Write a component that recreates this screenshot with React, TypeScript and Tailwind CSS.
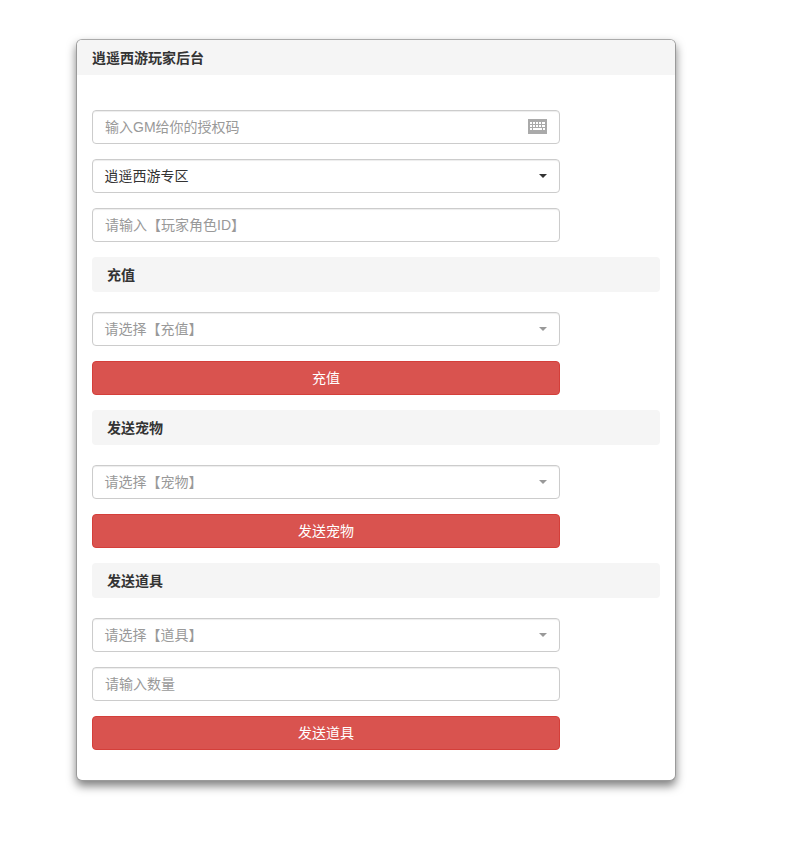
import type { ReactNode } from 'react';

const font = "font-['Liberation_Sans','Noto_Sans_CJK_SC',sans-serif]";

function SectionTitle({ children }: { children: ReactNode }) {
  return (
    <div className="h-[35px] bg-[#f5f5f5] rounded-[4px] pl-[15px] pt-[1px] flex items-center text-[14px] font-bold text-[#333]">
      {children}
    </div>
  );
}

function TextField({ placeholder, className = '' }: { placeholder: string; className?: string }) {
  return (
    <input
      placeholder={placeholder}
      className={`block w-[468px] h-[34px] px-3 bg-white border border-[#ccc] rounded-[4px] shadow-[inset_0_1px_1px_rgba(0,0,0,0.075)] text-[14px] text-[#555] placeholder:text-[#999] outline-none ${className}`}
    />
  );
}

function SelectField({ label, active = false, className = '' }: { label: string; active?: boolean; className?: string }) {
  return (
    <div
      className={`w-[468px] h-[34px] pl-[11.5px] pr-[12px] bg-white border border-[#ccc] rounded-[4px] shadow-[inset_0_1px_1px_rgba(0,0,0,0.075)] flex items-center justify-between text-[14px] ${active ? 'text-[#333]' : 'text-[#999]'} ${className}`}
    >
      <span>{label}</span>
      <span className={`w-0 h-0 border-x-[4px] border-x-transparent border-t-[4px] ${active ? 'border-t-[#333]' : 'border-t-[#999]'}`} />
    </div>
  );
}

function RedButton({ children }: { children: ReactNode }) {
  return (
    <button className="block w-[468px] h-[34px] bg-[#d9534f] border border-[#d43f3a] rounded-[4px] text-[14px] text-white">
      {children}
    </button>
  );
}

function KeyboardIcon() {
  return (
    <svg width="19" height="15" viewBox="0 0 19 15" className="absolute right-[13px] top-[9px]">
      <rect width="19" height="15" fill="#aaa" />
      <g fill="#fff">
        <rect x="2" y="3" width="2" height="2" />
        <rect x="5" y="3" width="2" height="2" />
        <rect x="8" y="3" width="2" height="2" />
        <rect x="11" y="3" width="2" height="2" />
        <rect x="14" y="3" width="3" height="2" />
        <rect x="2" y="6" width="2" height="2" />
        <rect x="5" y="6" width="2" height="2" />
        <rect x="8" y="6" width="2" height="2" />
        <rect x="11" y="6" width="2" height="2" />
        <rect x="14" y="6" width="3" height="2" />
        <rect x="2" y="9" width="2" height="2" />
        <rect x="5" y="9" width="9" height="2" />
        <rect x="15" y="9" width="2" height="2" />
      </g>
    </svg>
  );
}

export default function App() {
  return (
    <div className={`min-h-[853px] bg-white pt-[39px] pl-[76px] ${font}`}>
      <div className="w-[600px] h-[742px] bg-white rounded-[6px] border border-[#9a9a9a] border-t-[#aaa] shadow-[0_5px_10px_rgba(0,0,0,0.5)] overflow-hidden">
        <div className="h-[35px] bg-[#f5f5f5] pl-[15px] pt-[1px] flex items-center text-[14px] font-bold text-[#333]">
          逍遥西游玩家后台
        </div>
        <div className="px-[15px] pt-[35px]">
          <div className="relative w-[468px]">
            <TextField placeholder="输入GM给你的授权码" />
            <KeyboardIcon />
          </div>
          <SelectField label="逍遥西游专区" active className="mt-[15px]" />
          <TextField placeholder="请输入【玩家角色ID】" className="mt-[15px]" />

          <div className="w-[568px] mt-[15px]">
            <SectionTitle>充值</SectionTitle>
          </div>
          <SelectField label="请选择【充值】" className="mt-[20px]" />
          <div className="mt-[15px]">
            <RedButton>充值</RedButton>
          </div>

          <div className="w-[568px] mt-[15px]">
            <SectionTitle>发送宠物</SectionTitle>
          </div>
          <SelectField label="请选择【宠物】" className="mt-[20px]" />
          <div className="mt-[15px]">
            <RedButton>发送宠物</RedButton>
          </div>

          <div className="w-[568px] mt-[15px]">
            <SectionTitle>发送道具</SectionTitle>
          </div>
          <SelectField label="请选择【道具】" className="mt-[20px]" />
          <TextField placeholder="请输入数量" className="mt-[15px]" />
          <div className="mt-[15px]">
            <RedButton>发送道具</RedButton>
          </div>
        </div>
      </div>
    </div>
  );
}
